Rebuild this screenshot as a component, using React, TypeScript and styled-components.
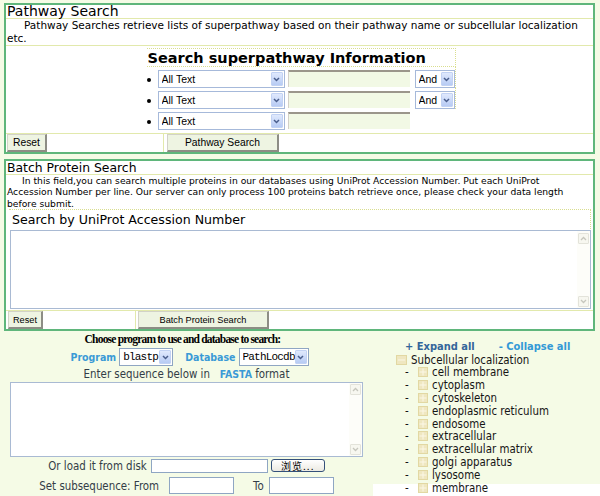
import React from "react";
import styled, { createGlobalStyle } from "styled-components";

const GREEN = "#5fb67b";
const LINE = "#e2e9ac";
const DOT = "#d9de8f";
const SANS = `"DejaVu Sans", Verdana, sans-serif`;
const NARROW = `"DejaVu Sans Condensed", "DejaVu Sans", Tahoma, sans-serif`;
const ARIAL = `"Liberation Sans", Arial, sans-serif`;
const MONO = `"Liberation Mono", "Courier New", monospace`;

const GlobalStyle = createGlobalStyle`
  *, *::before, *::after { box-sizing: border-box; }
  html, body { margin: 0; padding: 0; }
  body {
    background: #f5fbe6;
    font-family: ${SANS};
    color: #000;
  }
`;

const Page = styled.div`
  width: 600px;
  height: 496px;
  overflow: hidden;
  padding-top: 3px;
`;

const Panel = styled.section<{ $gap?: number }>`
  width: 591px;
  margin: ${(p) => p.$gap ?? 0}px 0 0 4px;
  border: 2px solid ${GREEN};
  background: #fff;
  display: flex;
  flex-direction: column;
`;

const PanelTitle = styled.h2<{ $size: number }>`
  margin: 0;
  height: 14px;
  padding-left: 1px;
  border-bottom: 1px solid ${LINE};
  font-family: ${SANS};
  font-size: ${(p) => p.$size}px;
  font-weight: normal;
  line-height: 13px;
  white-space: nowrap;
`;

const Desc = styled.p<{ $size: number; $lh: number; $h: number; $indent: number; $rule?: boolean }>`
  margin: 0;
  height: ${(p) => p.$h}px;
  padding-left: 1px;
  font-size: ${(p) => p.$size}px;
  line-height: ${(p) => p.$lh}px;
  text-indent: ${(p) => p.$indent}px;
  white-space: nowrap;
  overflow: hidden;
  border-bottom: ${(p) => (p.$rule ? `1px solid ${LINE}` : "none")};
`;

/* ---------- pathway criteria ---------- */

const PathwayArea = styled.div`
  height: 88px;
  padding: 2px 0 0 3px;
  border-bottom: 1px solid ${LINE};
  display: flex;
  justify-content: center;
`;

const CriteriaGrid = styled.div`
  display: grid;
  grid-template-columns: 11px 130px 127px 41px;
  grid-template-rows: 19px repeat(3, 21px);
`;

const CriteriaTitle = styled.h3`
  grid-column: 1 / -1;
  margin: 0;
  padding: 1px 0 0 1px;
  border: 1px dotted ${DOT};
  border-left: none;
  font-size: 14.5px;
  font-weight: bold;
  line-height: 17px;
  white-space: nowrap;
`;

const Bullet = styled.span`
  width: 4px;
  height: 4px;
  margin-top: 11px;
  border-radius: 50%;
  background: #000;
`;

const SelectFrame = styled.div<{ $w: number; $h: number; $mt?: number; $border: string }>`
  display: flex;
  width: ${(p) => p.$w}px;
  height: ${(p) => p.$h}px;
  margin-top: ${(p) => p.$mt ?? 0}px;
  border: 1px solid ${(p) => p.$border};
  background: #fff;
`;

const NativeSelect = styled.select<{ $font: string; $size: number; $ls?: number }>`
  flex: 1;
  min-width: 0;
  appearance: none;
  -webkit-appearance: none;
  border: none;
  outline: none;
  background: transparent;
  padding: 0 0 0 3px;
  margin: 0;
  font-family: ${(p) => p.$font};
  font-size: ${(p) => p.$size}px;
  letter-spacing: ${(p) => p.$ls ?? 0}px;
  color: #000;
`;

const DropArrow = styled.span`
  width: 12px;
  margin: 1px 1px 1px 0;
  border: 1px solid #c2d2f3;
  border-radius: 1px;
  background: linear-gradient(#e0e9fd, #b7cbf4);
  display: flex;
  align-items: center;
  justify-content: center;
`;

const CriteriaInput = styled.input`
  width: 122px;
  height: 17px;
  margin: 3px 0 0 0;
  padding: 0 2px;
  border: none;
  border-top: 2px solid #9b968b;
  border-left: 1px solid #d3d0c8;
  background: #f2f9e5;
  outline: none;
  font-size: 11px;
`;

const AndCell = styled.div<{ $dotted: boolean }>`
  padding-top: 3px;
  border-right: ${(p) => (p.$dotted ? `1px dotted ${DOT}` : "none")};
`;

/* ---------- buttons ---------- */

const ButtonRow = styled.div`
  display: flex;
  height: 18px;
`;

const ButtonCell = styled.div<{ $w?: number; $pl: number }>`
  ${(p) => (p.$w ? `width: ${p.$w}px; border-right: 1px solid ${LINE};` : "flex: 1;")}
  padding-left: ${(p) => p.$pl}px;
  display: flex;
`;

const PushButton = styled.button<{ $w: number; $size: number }>`
  width: ${(p) => p.$w}px;
  height: 18px;
  padding: 0;
  background: #eef4e2;
  border: 1px solid #d2d2c8;
  border-right: 2px solid #8d8d85;
  border-bottom: 2px solid #8d8d85;
  font-family: ${ARIAL};
  font-size: ${(p) => p.$size}px;
  color: #000;
`;

/* ---------- batch ---------- */

const BatchArea = styled.div`
  height: 102px;
  padding: 0 2px 0 3px;
  border-bottom: 1px solid ${LINE};
  display: flex;
  flex-direction: column;
`;

const BatchTitle = styled.h3`
  margin: 0;
  height: 20px;
  padding-left: 3px;
  border-top: 1px dotted ${DOT};
  border-right: 1px dotted ${DOT};
  font-size: 12.6px;
  font-weight: normal;
  line-height: 19px;
  white-space: nowrap;
`;

const TextBox = styled.div<{ $w?: number; $h: number; $mt?: number; $ml?: number }>`
  display: flex;
  width: ${(p) => (p.$w ? `${p.$w}px` : "auto")};
  height: ${(p) => p.$h}px;
  margin-top: ${(p) => p.$mt ?? 0}px;
  margin-left: ${(p) => p.$ml ?? 0}px;
  border: 1px solid #a9bad3;
  background: #fff;
`;

const TextArea = styled.textarea`
  flex: 1;
  border: none;
  outline: none;
  resize: none;
  background: transparent;
  padding: 2px;
  font-family: ${MONO};
  font-size: 11px;
`;

const ScrollTrack = styled.div<{ $pad: string }>`
  width: 13px;
  padding: ${(p) => p.$pad};
  display: flex;
  flex-direction: column;
  justify-content: space-between;
  background: #fdfdf9;
`;

const ScrollArrow = styled.span`
  height: 11px;
  border: 1px solid #e3e3da;
  border-radius: 1px;
  background: #f7f7f0;
  display: flex;
  align-items: center;
  justify-content: center;
`;

/* ---------- lower area ---------- */

const Lower = styled.div`
  display: flex;
  height: 165px;
`;

const BlastCol = styled.div`
  width: 373px;
  display: flex;
  flex-direction: column;
  align-items: center;
  font-family: ${NARROW};
  font-size: 11.4px;
  color: #333d47;
`;

const ChooseTitle = styled.div`
  margin-top: 2px;
  height: 13px;
  padding-right: 8px;
  font-family: "Liberation Serif", "Times New Roman", serif;
  font-weight: bold;
  font-size: 11.5px;
  letter-spacing: -0.8px;
  line-height: 13px;
  color: #000;
  white-space: nowrap;
`;

const ProgramRow = styled.div`
  margin-top: 2px;
  height: 18px;
  padding-left: 6px;
  display: flex;
  align-items: center;
`;

const FieldLabel = styled.span<{ $ml?: number; $mr?: number }>`
  margin-left: ${(p) => p.$ml ?? 0}px;
  margin-right: ${(p) => p.$mr ?? 0}px;
  font-weight: bold;
  font-size: 10.5px;
  color: #3a9ad6;
  white-space: nowrap;
`;

const EnterLine = styled.div`
  height: 16px;
  line-height: 16px;
  white-space: nowrap;
`;

const FormRow = styled.div<{ $mt?: number; $h: number }>`
  margin-top: ${(p) => p.$mt ?? 0}px;
  height: ${(p) => p.$h}px;
  display: flex;
  align-items: center;
  white-space: nowrap;
`;

const PlainInput = styled.input<{ $w: number; $h: number; $ml: number }>`
  width: ${(p) => p.$w}px;
  height: ${(p) => p.$h}px;
  margin: 0 0 0 ${(p) => p.$ml}px;
  padding: 0 2px;
  border: 1px solid #8fa6c3;
  background: #fff;
  outline: none;
  font-size: 11px;
`;

const BrowseButton = styled.button`
  width: 54px;
  height: 13px;
  margin-left: 3px;
  padding: 0;
  border: 1px solid #34507a;
  border-radius: 3px;
  background: linear-gradient(#ffffff, #eceae2);
  font-family: "Noto Sans CJK SC", sans-serif;
  font-size: 10px;
  line-height: 11px;
  letter-spacing: 1px;
  color: #000;
`;

const TreeCol = styled.div`
  flex: 1;
  padding-top: 9px;
  background: linear-gradient(to bottom, transparent 153px, #fff 153px);
  font-family: ${NARROW};
  font-size: 11.4px;
  color: #151515;
`;

const ExpandBar = styled.div`
  height: 13px;
  padding-left: 32px;
  display: flex;
  gap: 24px;
  font-weight: bold;
  font-size: 11px;
  line-height: 13px;
  white-space: nowrap;
`;

const ExpandLink = styled.a<{ $tone: "dark" | "light" }>`
  color: ${(p) => (p.$tone === "dark" ? "#33669a" : "#3399d6")};
  text-decoration: none;
`;

const TreeRoot = styled.div`
  height: 13px;
  padding-left: 23px;
  display: flex;
  align-items: center;
  gap: 4px;
`;

const TreeItem = styled.div`
  height: 12.8px;
  padding-left: 32px;
  display: flex;
  align-items: center;
`;

const Dash = styled.span`
  width: 13px;
`;

const NodeLabel = styled.span<{ $ml?: number }>`
  margin-left: ${(p) => p.$ml ?? 4}px;
  white-space: nowrap;
`;

/* ---------- small drawings ---------- */

const Chevron = () => (
  <svg width="7" height="5" viewBox="0 0 7 5">
    <path d="M1 1l2.5 2.5L6 1" fill="none" stroke="#4a5e8c" strokeWidth="1.5" />
  </svg>
);

const ScrollChevron = ({ up }: { up?: boolean }) => (
  <svg width="7" height="5" viewBox="0 0 7 5">
    <path d={up ? "M1 4l2.5-2.5L6 4" : "M1 1l2.5 2.5L6 1"} fill="none" stroke="#c6c6bd" strokeWidth="1.3" />
  </svg>
);

const PlusBox = () => (
  <svg width="10" height="10" viewBox="0 0 10 10">
    <rect x="0.5" y="0.5" width="9" height="9" fill="#efe7c0" stroke="#e2d8a2" />
    <path d="M5 1.5v7M1.5 5h7" stroke="#fbf7e6" strokeWidth="1" />
  </svg>
);

const MinusBox = () => (
  <svg width="11" height="10" viewBox="0 0 11 10">
    <rect x="0.5" y="0.5" width="10" height="9" fill="#efe7c0" stroke="#e2d8a2" />
    <path d="M2 5h7" stroke="#fbf7e6" strokeWidth="1" />
  </svg>
);

type SelectProps = {
  w: number;
  h: number;
  mt?: number;
  value: string;
  font: string;
  size: number;
  ls?: number;
  border: string;
};

const FauxSelect = ({ w, h, mt, value, font, size, ls, border }: SelectProps) => (
  <SelectFrame $w={w} $h={h} $mt={mt} $border={border}>
    <NativeSelect $font={font} $size={size} $ls={ls} value={value} onChange={() => {}}>
      <option>{value}</option>
    </NativeSelect>
    <DropArrow>
      <Chevron />
    </DropArrow>
  </SelectFrame>
);

const ScrollBox = ({ w, h, mt, ml, pad }: { w?: number; h: number; mt?: number; ml?: number; pad: string }) => (
  <TextBox $w={w} $h={h} $mt={mt} $ml={ml}>
    <TextArea />
    <ScrollTrack $pad={pad}>
      <ScrollArrow>
        <ScrollChevron up />
      </ScrollArrow>
      <ScrollArrow>
        <ScrollChevron />
      </ScrollArrow>
    </ScrollTrack>
  </TextBox>
);

const locations = [
  "cell membrane",
  "cytoplasm",
  "cytoskeleton",
  "endoplasmic reticulum",
  "endosome",
  "extracellular",
  "extracellular matrix",
  "golgi apparatus",
  "lysosome",
  "membrane",
];

export default function App() {
  return (
    <>
      <GlobalStyle />
      <Page>
        <Panel>
          <PanelTitle $size={14}>Pathway Search</PanelTitle>
          <Desc $size={10.5} $lh={13} $h={27} $indent={17} $rule>
            Pathway Searches retrieve lists of superpathway based on their pathway name or subcellular localization
            <br />
            etc.
          </Desc>
          <PathwayArea>
            <CriteriaGrid>
              <CriteriaTitle>Search superpathway Information</CriteriaTitle>
              {[0, 1, 2].map((i) => (
                <React.Fragment key={i}>
                  <Bullet />
                  <FauxSelect w={127} h={18} mt={3} value="All Text" font={ARIAL} size={10.5} border="#a6b9da" />
                  <CriteriaInput />
                  <AndCell $dotted={i < 2}>
                    {i < 2 && (
                      <FauxSelect w={40} h={18} value="And" font={ARIAL} size={10.5} border="#a6b9da" />
                    )}
                  </AndCell>
                </React.Fragment>
              ))}
            </CriteriaGrid>
          </PathwayArea>
          <ButtonRow>
            <ButtonCell $w={158} $pl={1}>
              <PushButton $w={40} $size={10.3}>Reset</PushButton>
            </ButtonCell>
            <ButtonCell $pl={3}>
              <PushButton $w={112} $size={10.3}>Pathway Search</PushButton>
            </ButtonCell>
          </ButtonRow>
        </Panel>

        <Panel $gap={5}>
          <PanelTitle $size={12.4}>Batch Protein Search</PanelTitle>
          <Desc $size={9.2} $lh={11.3} $h={34} $indent={15}>
            In this field,you can search multiple proteins in our databases using UniProt Accession Number. Put each
            UniProt
            <br />
            Accession Number per line. Our server can only process 100 proteins batch retrieve once, please check your
            data length
            <br />
            before submit.
          </Desc>
          <BatchArea>
            <BatchTitle>Search by UniProt Accession Number</BatchTitle>
            <ScrollBox h={79} mt={1} ml={1} pad="2px 1px 1px 1px" />
          </BatchArea>
          <ButtonRow>
            <ButtonCell $w={130} $pl={2}>
              <PushButton $w={35} $size={9.2}>Reset</PushButton>
            </ButtonCell>
            <ButtonCell $pl={2}>
              <PushButton $w={131} $size={9.2}>Batch Protein Search</PushButton>
            </ButtonCell>
          </ButtonRow>
        </Panel>

        <Lower>
          <BlastCol>
            <ChooseTitle>Choose program to use and database to search:</ChooseTitle>
            <ProgramRow>
              <FieldLabel $mr={3}>Program</FieldLabel>
              <FauxSelect w={54} h={18} value="blastp" font={MONO} size={11} ls={-0.8} border="#8fa6c3" />
              <FieldLabel $ml={12} $mr={3}>
                Database
              </FieldLabel>
              <FauxSelect w={70} h={18} value="PathLocdb" font={MONO} size={11} ls={-0.8} border="#8fa6c3" />
            </ProgramRow>
            <EnterLine>
              Enter sequence below in&nbsp;&nbsp; <FieldLabel>FASTA</FieldLabel> format
            </EnterLine>
            <ScrollBox w={353} h={75} pad="1px 1px 1px 1px" />
            <FormRow $h={17}>
              Or load it from disk
              <PlainInput $w={117} $h={14} $ml={4} type="text" />
              <BrowseButton>浏览...</BrowseButton>
            </FormRow>
            <FormRow $mt={3} $h={17}>
              Set subsequence: From
              <PlainInput $w={65} $h={17} $ml={10} type="text" />
              <NodeLabel $ml={19}>To</NodeLabel>
              <PlainInput $w={65} $h={17} $ml={5} type="text" />
            </FormRow>
          </BlastCol>

          <TreeCol>
            <ExpandBar>
              <ExpandLink $tone="dark">+ Expand all</ExpandLink>
              <ExpandLink $tone="light">- Collapse all</ExpandLink>
            </ExpandBar>
            <TreeRoot>
              <MinusBox />
              <NodeLabel $ml={0}>Subcellular localization</NodeLabel>
            </TreeRoot>
            {locations.map((name) => (
              <TreeItem key={name}>
                <Dash>-</Dash>
                <PlusBox />
                <NodeLabel>{name}</NodeLabel>
              </TreeItem>
            ))}
          </TreeCol>
        </Lower>
      </Page>
    </>
  );
}
